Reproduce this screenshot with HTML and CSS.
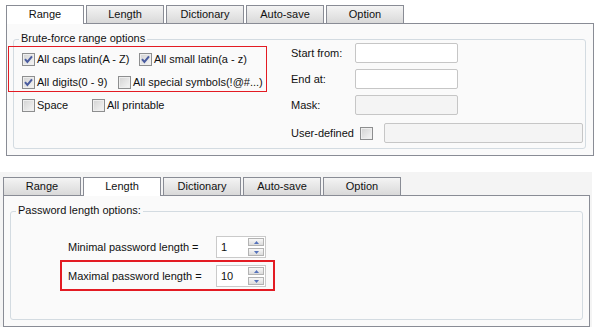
FILE: index.html
```html
<!DOCTYPE html>
<html>
<head>
<meta charset="utf-8">
<link rel="stylesheet" href="styles.css">
</head>
<body>
<div class="win win-top">
  <div class="tabs">
    <div class="tab active">Range</div>
    <div class="tab">Length</div>
    <div class="tab">Dictionary</div>
    <div class="tab">Auto-save</div>
    <div class="tab">Option</div>
  </div>
  <div class="panel">
    <div class="group group-range">
      <span class="legend">Brute-force range options</span>
      <div class="redbox"></div>
      <div class="checks">
        <div class="crow">
          <label class="chk c1"><span class="box"><svg width="11" height="11" viewBox="0 0 11 11"><path d="M2 5.2 L4.4 8 L9 2.3" fill="none" stroke="#4a5c9f" stroke-width="2"/></svg></span>All caps latin(A - Z)</label>
          <label class="chk"><span class="box"><svg width="11" height="11" viewBox="0 0 11 11"><path d="M2 5.2 L4.4 8 L9 2.3" fill="none" stroke="#4a5c9f" stroke-width="2"/></svg></span>All small latin(a - z)</label>
        </div>
        <div class="crow">
          <label class="chk c2"><span class="box"><svg width="11" height="11" viewBox="0 0 11 11"><path d="M2 5.2 L4.4 8 L9 2.3" fill="none" stroke="#4a5c9f" stroke-width="2"/></svg></span>All digits(0 - 9)</label>
          <label class="chk"><span class="box"></span>All special symbols(!@#...)</label>
        </div>
        <div class="crow">
          <label class="chk c3"><span class="box"></span>Space</label>
          <label class="chk"><span class="box"></span>All printable</label>
        </div>
      </div>
      <div class="fields">
        <div class="frow"><span class="flabel">Start from:</span><span class="inp"></span></div>
        <div class="frow"><span class="flabel">End at:</span><span class="inp"></span></div>
        <div class="frow mask"><span class="flabel">Mask:</span><span class="inp dis"></span></div>
        <div class="frow"><span class="ulabel">User-defined</span><span class="box ud"></span><span class="inp dis wide"></span></div>
      </div>
    </div>
  </div>
</div>

<div class="win win-bottom">
  <div class="tabs">
    <div class="tab">Range</div>
    <div class="tab active">Length</div>
    <div class="tab">Dictionary</div>
    <div class="tab">Auto-save</div>
    <div class="tab">Option</div>
  </div>
  <div class="panel panel-b">
    <div class="group group-len">
      <span class="legend">Password length options:</span>
      <div class="redbox redbox-len"></div>
      <div class="lrow">
        <span class="llabel">Minimal password length =</span>
        <div class="spin">
          <span class="spin-val">1</span>
          <span class="spin-btns">
            <span class="sbtn"><svg width="5" height="3" viewBox="0 0 5 3"><path d="M0 3 L2.5 0 L5 3Z" fill="#5572bb"/></svg></span>
            <span class="sbtn"><svg width="5" height="3" viewBox="0 0 5 3"><path d="M0 0 L2.5 3 L5 0Z" fill="#5572bb"/></svg></span>
          </span>
        </div>
      </div>
      <div class="lrow">
        <span class="llabel">Maximal password length =</span>
        <div class="spin">
          <span class="spin-val">10</span>
          <span class="spin-btns">
            <span class="sbtn"><svg width="5" height="3" viewBox="0 0 5 3"><path d="M0 3 L2.5 0 L5 3Z" fill="#5572bb"/></svg></span>
            <span class="sbtn"><svg width="5" height="3" viewBox="0 0 5 3"><path d="M0 0 L2.5 3 L5 0Z" fill="#5572bb"/></svg></span>
          </span>
        </div>
      </div>
    </div>
  </div>
</div>
</body>
</html>
```

FILE: styles.css
```css
* { box-sizing: border-box; }

body {
  margin: 0;
  font-family: "Liberation Sans", Arial, sans-serif;
  font-size: 11px;
  line-height: 13px;
  color: #111;
  background: #fff;
}

.win-top {
  padding: 5px 0 0 6px;
  width: 600px;
}

.win-bottom {
  margin-top: 16px;
  padding: 5px 0 0 3px;
  width: 592px;
  background: #f4f4f4;
}

.tabs {
  display: flex;
  align-items: flex-start;
  gap: 2px;
  height: 18px;
  position: relative;
  z-index: 1;
}

.tab {
  width: 78px;
  height: 18px;
  border: 1px solid #898c95;
  border-bottom: none;
  background: linear-gradient(#f4f4f4, #d9d9d9);
  text-align: center;
  line-height: 17px;
}

.tab.active {
  background: #fff;
  height: 19px;
}

.panel {
  width: 588px;
  border: 1px solid #898c95;
  background: #fafafa;
  padding: 15px 7px 6px 6px;
}

.panel-b {
  width: 587px;
  padding: 15px 6px 6px 6px;
}

.group {
  position: relative;
  border: 1px solid #d3dbe1;
  border-radius: 3px;
}

.group-range {
  height: 110px;
  display: flex;
  padding: 8px 0 0 8px;
}

.group-len {
  height: 109px;
  padding: 20px 0 0 50px;
}

.legend {
  position: absolute;
  top: -8px;
  left: 5px;
  padding: 0 2px;
  background: #fafafa;
  white-space: nowrap;
}

.redbox {
  position: absolute;
  left: -6px;
  top: 6px;
  width: 259px;
  height: 46px;
  border: 1px solid #e31b23;
  pointer-events: none;
}

.redbox-len {
  left: 49px;
  top: 48px;
  width: 215px;
  height: 31px;
  border: 2px solid #e31b23;
}

.checks {
  width: 269px;
  flex: none;
}

.crow {
  display: flex;
  align-items: center;
  height: 23px;
}

.chk {
  display: flex;
  align-items: center;
  white-space: nowrap;
}

.c1 { width: 117px; }
.c2 { width: 96px; }
.c3 { width: 70px; }

.box {
  width: 13px;
  height: 13px;
  flex: none;
  margin-right: 2px;
  border: 1px solid #8d8e8f;
  background: linear-gradient(135deg, #d2d2d2, #f6f6f6);
  box-shadow: inset 0 0 0 1px #eeeeee;
  display: flex;
}

.fields {
  margin-top: -5px;
}

.frow {
  display: flex;
  align-items: center;
  height: 20px;
  margin-bottom: 6px;
}

.frow.mask { margin-bottom: 8px; }

.flabel { width: 64px; }
.ulabel { width: 69px; }

.box.ud { margin-right: 11px; }

.inp {
  width: 103px;
  height: 20px;
  border: 1px solid #c6c6c6;
  border-radius: 2px;
  background: #fff;
}

.inp.dis { background: #f4f4f4; }
.inp.wide { width: 199px; }

.lrow {
  display: flex;
  align-items: center;
  width: 213px;
  height: 29px;
  padding: 4px 8px 3px 7px;
}

.llabel {
  width: 148px;
  white-space: nowrap;
}

.spin {
  display: flex;
  width: 50px;
  height: 22px;
  border: 1px solid #cacaca;
  background: #fff;
}

.spin-val {
  flex: 1;
  padding-left: 4px;
  line-height: 20px;
}

.spin-btns {
  width: 17px;
  padding: 1px 1px 1px 0;
  display: flex;
  flex-direction: column;
  gap: 2px;
}

.sbtn {
  flex: 1;
  border: 1px solid #b3b3b3;
  background: linear-gradient(#f8f8f8, #dcdcdc);
  display: flex;
  align-items: center;
  justify-content: center;
}
```
